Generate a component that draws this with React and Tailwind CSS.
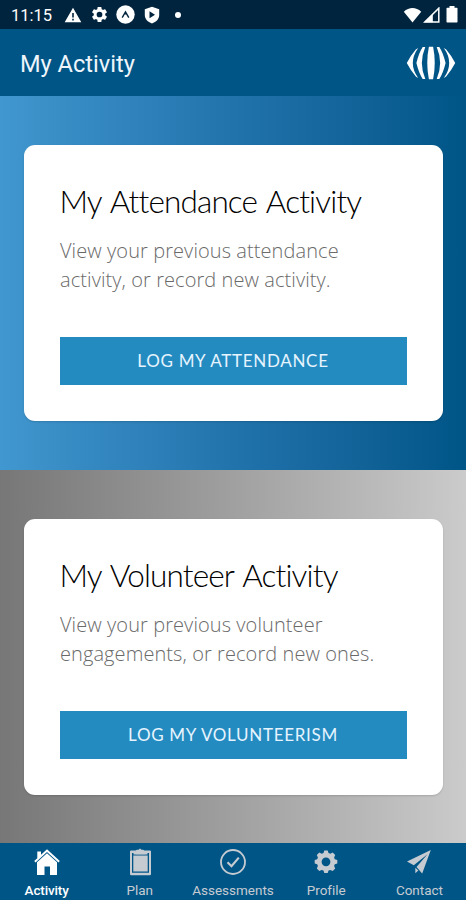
function StatusBar() {
  return (
    <div className="flex h-[29px] shrink-0 items-center bg-[#00243d] pr-[8px] pl-[11px] text-white">
      <span className="w-[42px] pt-[1px] text-[16.5px] leading-[29px] whitespace-nowrap">11:15</span>
      <svg className="ml-[11px] h-[16px] w-[18px]" viewBox="0 0 18 16" fill="currentColor">
        <path fillRule="evenodd" d="M9 .7 17.3 15.3H.7zM8.2 6v4.4h1.6V6zm0 5.7v1.7h1.6v-1.7z" />
      </svg>
      <svg className="ml-[8px] h-[19px] w-[19px]" viewBox="0 0 24 24" fill="currentColor">
        <path d="M19.14 12.94c.04-.3.06-.61.06-.94 0-.32-.02-.64-.07-.94l2.03-1.58a.49.49 0 0 0 .12-.61l-1.92-3.32a.488.488 0 0 0-.59-.22l-2.39.96c-.5-.38-1.03-.7-1.62-.94l-.36-2.54a.484.484 0 0 0-.48-.41h-3.84c-.24 0-.43.17-.47.41l-.36 2.54c-.59.24-1.13.57-1.62.94l-2.39-.96c-.22-.08-.47 0-.59.22L2.74 8.87c-.12.21-.08.47.12.61l2.03 1.58c-.05.3-.09.63-.09.94s.02.64.07.94l-2.03 1.58a.49.49 0 0 0-.12.61l1.92 3.32c.12.22.37.29.59.22l2.39-.96c.5.38 1.03.7 1.62.94l.36 2.54c.05.24.24.41.48.41h3.84c.24 0 .44-.17.47-.41l.36-2.54c.59-.24 1.13-.56 1.62-.94l2.39.96c.22.08.47 0 .59-.22l1.92-3.32c.12-.22.07-.47-.12-.61zM12 15.6A3.6 3.6 0 1 1 12 8.400a3.600 3.600 0 0 1 0 7.200z" />
      </svg>
      <svg className="ml-[7px] h-[19px] w-[19px]" viewBox="0 0 19 19">
        <circle cx="9.500" cy="9.500" r="9.200" fill="currentColor" />
        <path d="M6.200 12.600 9.500 6.800l3.300 5.800M9.500 6.800v2.700" fill="none" stroke="#00243d" strokeWidth="1.400" />
      </svg>
      <svg className="ml-[9px] h-[18px] w-[16px]" viewBox="0 0 16 18" fill="currentColor">
        <path fillRule="evenodd" d="M8 .8 15.200 3.300V9c0 4-3 7-7.200 8.500C3.800 16 .8 13 .8 9V3.300zM5.500 5.200v7L11 8.700z" />
      </svg>
      <span className="ml-[15px] h-[6px] w-[6px] rounded-full bg-white" />
      <div className="ml-auto flex items-center">
        <svg className="h-[16px] w-[19px]" viewBox="0 0 19 16" fill="currentColor">
          <path d="M.8 4.700C6-.2 13-.2 18.200 4.700L9.500 15.600z" />
        </svg>
        <svg className="ml-[1px] h-[16px] w-[17px]" viewBox="0 0 17 16">
          <path d="M1.800 15h14V1.200z" fill="none" stroke="currentColor" strokeWidth="1.500" />
          <path d="M1.200 15.300h8.600V7z" fill="currentColor" />
        </svg>
        <svg className="ml-[6px] h-[17px] w-[12px]" viewBox="0 0 12 17" fill="currentColor">
          <path d="M3.500 0h5v1.800h2.300q.7 0 .7.700v13.300q0 .7-.7.700H1.200q-.7 0-.7-.700V2.500q0-.7.7-.7h2.300z" />
        </svg>
      </div>
    </div>
  );
}

function Logo() {
  return (
    <svg className="h-[34px] w-[50px]" viewBox="0 0 50 34" fill="#fff">
      <path d="M22.900 .8h4.200Q30.400 17 27.100 33.200h-4.200Q19.600 17 22.900 .8z" />
      <path d="M19.300 1Q12.400 17 19.300 33h-2.600Q13 27.500 10.400 17 13 6.500 16.700 1z" />
      <path d="M12.200 2Q1.400 17 12.200 32L9.800 30.500Q5 25 .8 17 5 9 9.800 3.500z" />
      <path d="M30.700 1Q37.600 17 30.700 33h2.600Q37 27.500 39.600 17 37 6.500 33.300 1z" />
      <path d="M37.800 2Q48.600 17 37.800 32l2.400-1.500Q45 25 49.200 17 45 9 40.200 3.500z" />
    </svg>
  );
}

function ActivityCard({ title, lines, action }) {
  return (
    <div className="flex h-[276px] w-[419px] flex-col rounded-[11px] bg-white px-[36px] pt-[34px] shadow-[0_1px_2px_rgba(0,0,0,0.15)]">
      <h2 className="font-['Lato'] text-[31.5px] leading-[44px] font-light tracking-[-0.85px] [word-spacing:2px] whitespace-nowrap text-black">{title}</h2>
      <p className="mt-[13px] pl-[0.5px] font-['Open_Sans'] text-[20px] leading-[29px] font-light tracking-[0.08px] whitespace-nowrap text-[#6a6a6a]">
        {lines.map((line) => (
          <span key={line} className="block">{line}</span>
        ))}
      </p>
      <button className="mt-[43px] h-[48px] w-[347px] shrink-0 bg-[#248bc0] font-['Lato'] text-[17px] leading-[47px] tracking-[0.7px] whitespace-nowrap text-[#e6f4ff]">
        {action}
      </button>
    </div>
  );
}

function Tab({ label, active, children }) {
  return (
    <div className={`flex flex-1 flex-col items-center pt-[5px] ${active ? "text-white" : "text-[#c6cbd1]"}`}>
      <svg className="h-[28px] w-[28px]" viewBox="0 0 28 28" fill="currentColor">
        {children}
      </svg>
      <span className={`mt-[6px] text-[13.5px] leading-[16px] whitespace-nowrap ${active ? "font-medium tracking-[-0.15px]" : "font-normal tracking-[-0.02px]"}`}>{label}</span>
    </div>
  );
}

export default function App() {
  return (
    <div className="flex h-[900px] w-[466px] flex-col overflow-hidden bg-[#005587] font-['Roboto']">
      <StatusBar />
      <header className="flex h-[67px] shrink-0 items-center justify-between bg-[#005587] pr-[10px] pl-[20px]">
        <h1 className="pt-[2px] text-[23.6px] leading-[30px] text-[#eef5fb]">My Activity</h1>
        <Logo />
      </header>
      <section className="flex h-[373.500px] shrink-0 justify-center bg-linear-to-r from-[#4197cf] via-[#2173ac] to-[#005587] pt-[48.500px]">
        <ActivityCard
          title="My Attendance Activity"
          lines={["View your previous attendance", "activity, or record new activity."]}
          action="LOG MY ATTENDANCE"
        />
      </section>
      <section className="flex h-[373px] shrink-0 justify-center bg-linear-to-r from-[#777777] to-[#cbcbcb] pt-[49px]">
        <ActivityCard
          title="My Volunteer Activity"
          lines={["View your previous volunteer", "engagements, or record new ones."]}
          action="LOG MY VOLUNTEERISM"
        />
      </section>
      <nav className="flex min-h-0 flex-1 bg-[#005587]">
        <Tab label="Activity" active>
          <path d="M14 1.200 26.800 13l-1.300 1.500L14 4 2.500 14.500 1.200 13 4.300 10.200V3.500h3.700v3.300z" />
          <path d="M14 5.200 24 14.300V27h-7v-8.500h-5.500V27H4V14.300z" />
        </Tab>
        <Tab label="Plan">
          <path fillRule="evenodd" d="M5 2.500h4.500L11 1.800h1.500L14 .5 15.500 1.800H17l1.500.7H24q1 0 1 1V26q0 1.200-1.200 1.200H5.200Q4 27.200 4 26V3.500q0-1 1-1zM6 5v19.800h17V5h-1.500v1.500h-14V5z" />
          <path d="M7.300 7.500h14.400v16H7.300z" />
          <path d="m9.500 6.200 3.200-3h3.600l3.200 3z" />
        </Tab>
        <Tab label="Assessments">
          <circle cx="14" cy="14" r="12" fill="none" stroke="currentColor" strokeWidth="1.800" />
          <path d="m8.500 14.200 4 4 7.300-8.600" fill="none" stroke="currentColor" strokeWidth="2.200" />
        </Tab>
        <Tab label="Profile">
          <path fillRule="evenodd" d="m11.500 5 .8-2.500h3.400l.8 2.500 1.800.7 2.400-1.100 2.500 2.500-1.100 2.400.7 1.800 2.500.8v3.400l-2.500.8-.7 1.800 1.100 2.400-2.500 2.500-2.400-1.100-1.800.7-.8 2.500h-3.400l-.8-2.500-1.800-.7-2.400 1.100-2.500-2.500 1.100-2.400-.7-1.800-2.500-.8v-3.400l2.500-.8.7-1.800-1.100-2.400 2.500-2.500 2.400 1.100zM14 9.400a4.400 4.400 0 1 0 0 8.800 4.400 4.400 0 0 0 0-8.800z" />
        </Tab>
        <Tab label="Contact">
          <path d="M25.800 2 2 13.500l6.800 3.700L22.500 6.200 11.500 19l5.700 6.500z" />
          <path d="m10.300 19.800 3 2.800-3 2.600z" />
        </Tab>
      </nav>
    </div>
  );
}
